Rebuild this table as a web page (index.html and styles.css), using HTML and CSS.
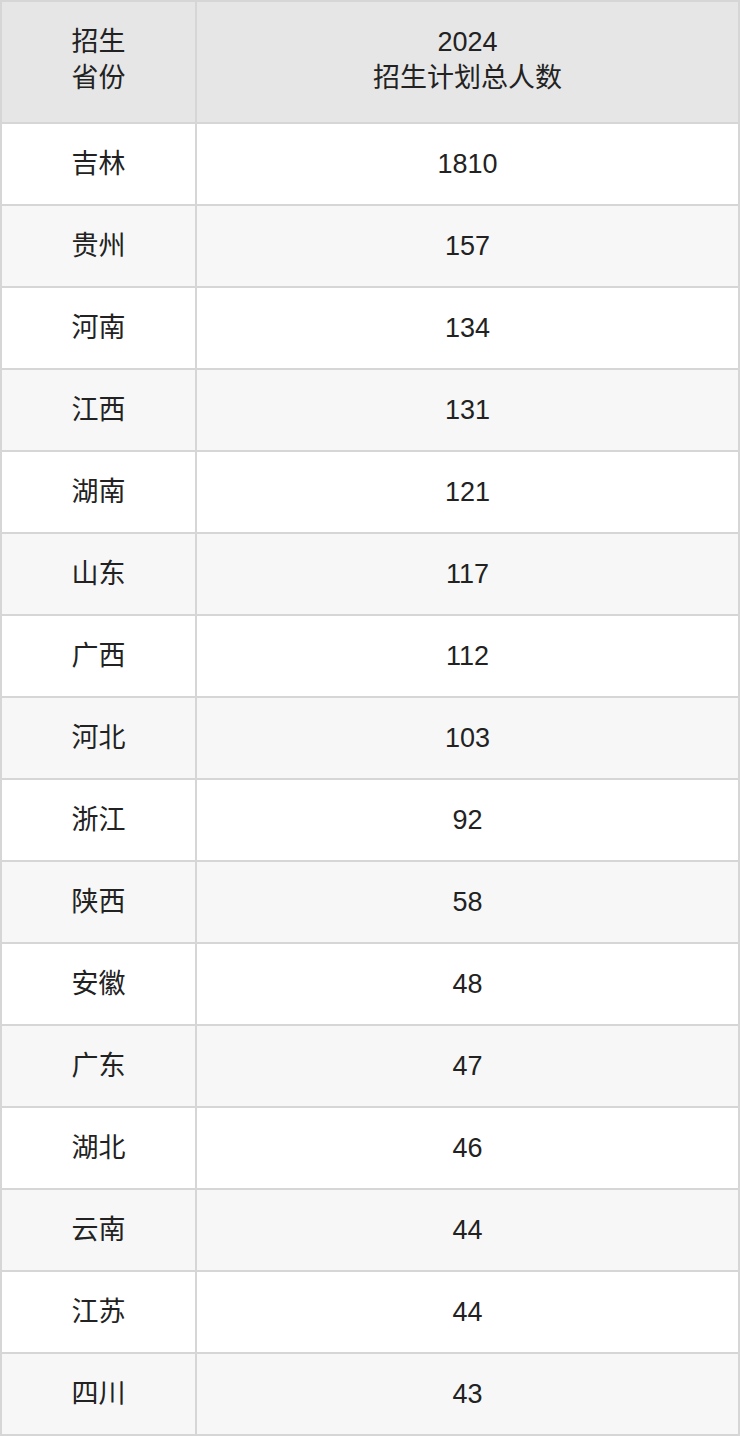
FILE: index.html
```html
<!DOCTYPE html>
<html lang="zh">
<head>
<meta charset="utf-8">
<link rel="stylesheet" href="styles.css">
</head>
<body>
<table class="plan">
  <thead>
    <tr><th class="col-prov">招生<br>省份</th><th>2024<br>招生计划总人数</th></tr>
  </thead>
  <tbody>
    <tr><td>吉林</td><td>1810</td></tr>
    <tr><td>贵州</td><td>157</td></tr>
    <tr><td>河南</td><td>134</td></tr>
    <tr><td>江西</td><td>131</td></tr>
    <tr><td>湖南</td><td>121</td></tr>
    <tr><td>山东</td><td>117</td></tr>
    <tr><td>广西</td><td>112</td></tr>
    <tr><td>河北</td><td>103</td></tr>
    <tr><td>浙江</td><td>92</td></tr>
    <tr><td>陕西</td><td>58</td></tr>
    <tr><td>安徽</td><td>48</td></tr>
    <tr><td>广东</td><td>47</td></tr>
    <tr><td>湖北</td><td>46</td></tr>
    <tr><td>云南</td><td>44</td></tr>
    <tr><td>江苏</td><td>44</td></tr>
    <tr><td>四川</td><td>43</td></tr>
  </tbody>
</table>
</body>
</html>
```
FILE: styles.css
```css
html, body {
  margin: 0;
  padding: 0;
  background: #ffffff;
}
.plan {
  width: 740px;
  border-collapse: collapse;
  table-layout: fixed;
  font-family: "Liberation Sans", "Noto Sans CJK SC", sans-serif;
  font-size: 27px;
  color: #222222;
}
.plan th, .plan td {
  border: 2px solid #d6d6d6;
  text-align: center;
  vertical-align: middle;
  padding: 0;
  font-weight: normal;
}
.plan .col-prov {
  width: 193px;
}
.plan thead th {
  background: #e6e6e6;
  height: 115px;
  padding-bottom: 5px;
  line-height: 36px;
}
.plan tbody td {
  height: 80px;
  line-height: 32px;
}
.plan tbody tr:nth-child(even) td {
  background: #f7f7f7;
}
```
